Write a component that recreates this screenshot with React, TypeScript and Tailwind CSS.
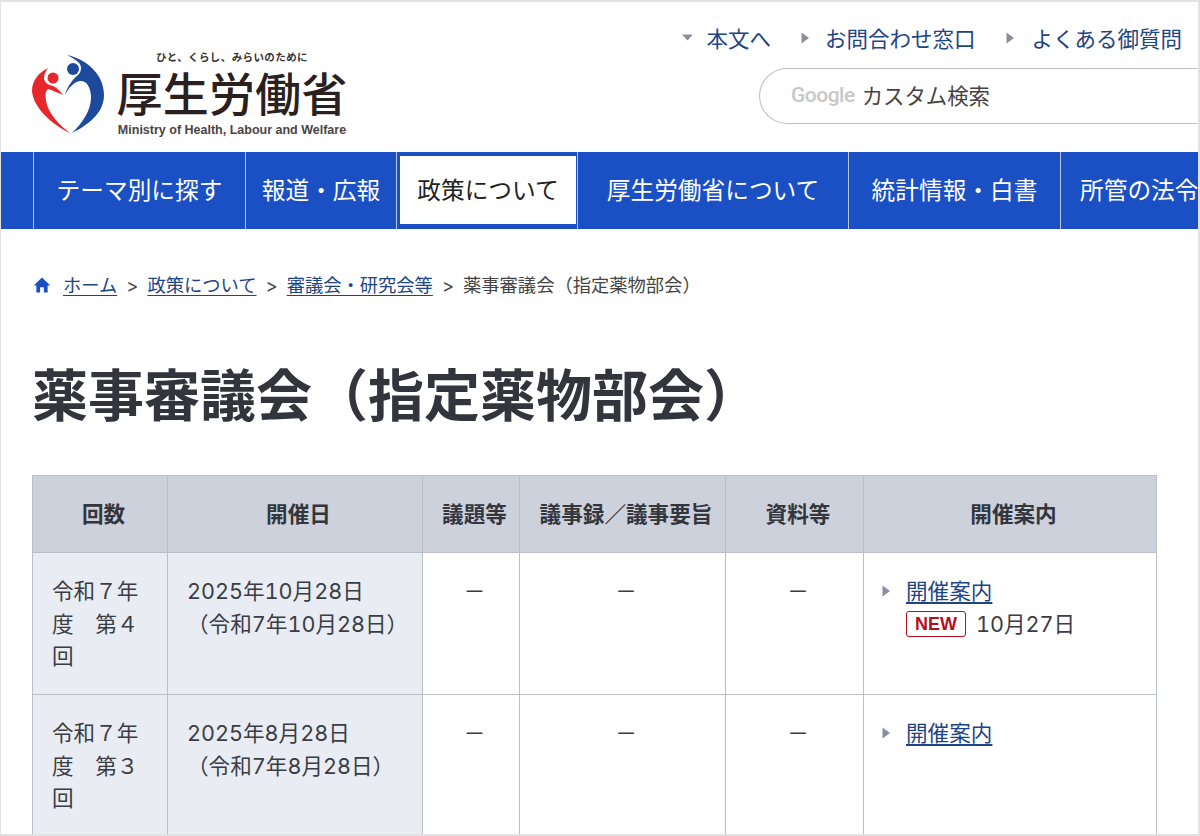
import type { ReactNode } from "react";

const F = "font-['Inter','Noto_Sans_CJK_JP','Noto_Sans_CJK_SC',sans-serif]";
const J = "font-['Noto_Sans_CJK_JP','Noto_Sans_CJK_SC',sans-serif]";

function Tri({ down = false, cls = "" }: { down?: boolean; cls?: string }) {
  return (
    <svg width="10" height="12" viewBox="0 0 10 12" className={"shrink-0 " + cls}>
      {down ? <path d="M0 2.5h11L5.5 8.5z" fill="#8b8f9c" /> : <path d="M1.5 0.5 9 6l-7.5 5.5z" fill="#8b8f9c" />}
    </svg>
  );
}

function Logo() {
  return (
    <div className="flex items-start">
      <svg width="76" height="82" viewBox="10 8 76 82" className="shrink-0 mt-[1px]">
        <path d="M47 10 C65 14 84 28 84 50 C84 66 72 78 52 88 C62 78 71 66 71 52 C71 42 66 35 60 36 C54 37 49 42 45 50 C47 42 52 35 58 30 C62 26 62 20 58 17 C55 14 51 12 47 10Z" fill="#1d4a9c" />
        <circle cx="53" cy="24" r="6" fill="#1d4a9c" />
        <path d="M28 23 C18 28 12 36 12 46 C13 62 32 80 50 88 C42 82 31 72 27 60 C25 52 25 46 28 44 C32 45 38 48 43 50 C40 46 36 42 33 41 C28 40 24 37 24 33 C24 29 26 26 28 23Z" fill="#e6282a" />
        <circle cx="33" cy="33" r="5.5" fill="#e6282a" />
      </svg>
      <div className={"ml-[10px] flex flex-col items-center w-[232px] " + J}>
        <div className="text-[10.5px] leading-[12px] font-bold text-[#3a3232] mt-[-1px] tracking-[0.4px]">ひと、くらし、みらいのために</div>
        <div className="text-[46px] leading-[48px] font-medium text-[#2b2020] tracking-[0.2px] mt-[4px] whitespace-nowrap">厚生労働省</div>
        <div className="text-[12.5px] leading-[13px] font-bold text-[#4a4444] font-['Liberation_Sans'] mt-[9px] whitespace-nowrap">Ministry of Health, Labour and Welfare</div>
      </div>
    </div>
  );
}

function GoogleMark() {
  return <span className="font-['Roboto'] text-[21px] leading-none tracking-[-0.5px] text-[#c8c8c8] font-medium">Google</span>;
}

const navItems = [
  { t: "テーマ別に探す", w: "w-[212px]" },
  { t: "報道・広報", w: "w-[151px]" },
  { t: "政策について", w: "w-[181px]", active: true },
  { t: "厚生労働省について", w: "w-[271px]" },
  { t: "統計情報・白書", w: "w-[212px]" },
];

function Nav() {
  return (
    <nav className={"flex h-[77px] bg-[#1b4fc4] pl-[32px] overflow-hidden shrink-0 text-[23.7px] leading-[36px] " + J}>
      {navItems.map((n) =>
        n.active ? (
          <div key={n.t} className={n.w + " shrink-0 border-l border-[#b5c5e8] flex pl-[3px] pr-[1px] pt-[4px] pb-[5px]"}>
            <div className="flex-1 bg-white flex items-center justify-center pb-[3px] text-[#222] whitespace-nowrap">{n.t}</div>
          </div>
        ) : (
          <div key={n.t} className={n.w + " shrink-0 border-l border-[#b5c5e8] flex items-center justify-center pb-[3px] text-white whitespace-nowrap"}>
            {n.t}
          </div>
        )
      )}
      <div className="w-[200px] shrink-0 border-l border-[#b5c5e8] flex items-center pl-[19px] pb-[3px] text-white whitespace-nowrap">所管の法令等</div>
    </nav>
  );
}

function Crumb({ children }: { children: ReactNode }) {
  return <a className="text-[#1d4585] underline underline-offset-[3px]">{children}</a>;
}

const th = "bg-[#cdd1dc] border border-[#bbbec8] font-bold text-[21.6px] text-[#33363c] text-center align-middle h-[77px] pl-[7px]";
const rh = "bg-[#e9ecf2] border border-[#bbbec8] align-top pt-[22px] pl-[19px] pr-[19px] text-[21.6px] leading-[32.5px] text-[#3a3d44] font-normal text-left";
const td = "border border-[#bbbec8] align-top pt-[22px] text-[21.6px] leading-[32.5px] text-[#3a3d44]";
const dash = td + " text-center pl-[7px]";
const dateTd = td + " pl-[19px] bg-[#e9ecf2] tabular-nums";

function CaseLink() {
  return (
    <div className="flex items-center">
      <Tri cls="mr-[15px]" />
      <a className="text-[#1d4585] underline underline-offset-[3px]">開催案内</a>
    </div>
  );
}

export default function App() {
  return (
    <div className={"w-[1200px] h-[836px] overflow-hidden bg-white flex flex-col border-t-2 border-b-2 border-l border-r-2 border-[#e2e2e2] " + F}>
      <header className={"h-[150px] shrink-0 flex justify-between " + J}>
        <div className="pl-[29px] pt-[50px]">
          <Logo />
        </div>
        <div className="flex flex-col items-end pt-[21px]">
          <div className="flex items-center text-[21.5px] leading-[30px] text-[#1d4585] pr-[16px]">
            <Tri down cls="mr-[14px]" />
            <span className="mr-[29px]">本文へ</span>
            <Tri cls="mr-[15px]" />
            <span className="mr-[30px]">お問合わせ窓口</span>
            <Tri cls="mr-[16px]" />
            <span>よくある御質問</span>
          </div>
          <div className="mt-[15px] w-[439px] h-[56px] border border-r-0 border-[#bdbdbd] rounded-l-[28px] flex items-center pl-[31px] pb-[1px] gap-[7px]">
            <GoogleMark />
            <span className="text-[21.4px] text-[#444]">カスタム検索</span>
          </div>
        </div>
      </header>
      <Nav />
      <div className="pl-[32px] pt-[40px] flex items-center h-[32px] box-content text-[18.3px] leading-[30px] text-[#444] shrink-0 whitespace-nowrap">
        <svg width="18" height="18" viewBox="0 0 24 24" className="mr-[12px] shrink-0">
          <path d="M12 2 1 12.5h3.5V22h5v-7h5v7h5v-9.5H23z" fill="#1b4fc4" />
        </svg>
        <Crumb>ホーム</Crumb>
        <span className="mx-[9px]">&gt;</span>
        <Crumb>政策について</Crumb>
        <span className="mx-[9px]">&gt;</span>
        <Crumb>審議会・研究会等</Crumb>
        <span className="mx-[9px]">&gt;</span>
        <span>薬事審議会（指定薬物部会）</span>
      </div>
      <h1 className={"pl-[31px] mt-[56px] text-[56px] leading-[70px] font-bold text-[#32353b] shrink-0 whitespace-nowrap " + J}>薬事審議会（指定薬物部会）</h1>
      <div className="pl-[31px] mt-[48px] shrink-0">
        <table className="table-fixed border-collapse w-[1124px]">
          <colgroup>
            <col className="w-[135px]" />
            <col className="w-[255px]" />
            <col className="w-[97px]" />
            <col className="w-[206px]" />
            <col className="w-[138px]" />
            <col className="w-[293px]" />
          </colgroup>
          <thead>
            <tr>
              <th className={th}>回数</th>
              <th className={th}>開催日</th>
              <th className={th}>議題等</th>
              <th className={th}>議事録／議事要旨</th>
              <th className={th}>資料等</th>
              <th className={th}>開催案内</th>
            </tr>
          </thead>
          <tbody>
            <tr className="h-[142px]">
              <th className={rh}>令和７年度　第４回</th>
              <td className={dateTd}>
                <div>2025年10月28日</div>
                <div>（令和7年10月28日）</div>
              </td>
              <td className={dash}>－</td>
              <td className={dash}>－</td>
              <td className={dash}>－</td>
              <td className={td + " pl-[17px]"}>
                <CaseLink />
                <div className="flex items-center pl-[25px] tabular-nums">
                  <span className="font-['Liberation_Sans'] font-bold text-[18px] leading-[22px] text-[#b50f1f] border border-[#b50f1f] rounded-[3px] px-[8px] h-[26px] flex items-center mr-[10px]">NEW</span>
                  <span>10月27日</span>
                </div>
              </td>
            </tr>
            <tr className="h-[142px]">
              <th className={rh}>令和７年度　第３回</th>
              <td className={dateTd}>
                <div>2025年8月28日</div>
                <div>（令和7年8月28日）</div>
              </td>
              <td className={dash}>－</td>
              <td className={dash}>－</td>
              <td className={dash}>－</td>
              <td className={td + " pl-[17px]"}>
                <CaseLink />
              </td>
            </tr>
          </tbody>
        </table>
      </div>
    </div>
  );
}
